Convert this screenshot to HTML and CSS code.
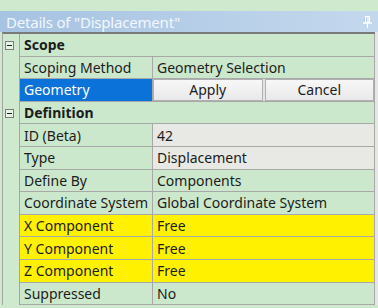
FILE: index.html
```html
<!DOCTYPE html>
<html lang="en">
<head>
    <meta charset="UTF-8">
    <title>Details of "Displacement"</title>
    <link rel="stylesheet" href="styles.css">
</head>
<body>
    <div class="title">
        <span>Details of "Displacement"</span>
        <svg class="pin" width="9" height="12" viewBox="0 0 9 12">
            <path d="M2.5 0.5h4v6h-4z" fill="none" stroke="#fff" stroke-width="1"/>
            <path d="M5 1v5" stroke="#fff" stroke-width="1"/>
            <path d="M0 7h9" stroke="#fff" stroke-width="1.4"/>
            <path d="M4.5 7v5" stroke="#fff" stroke-width="1.2"/>
        </svg>
    </div>

    <div class="grid">
        <div class="row">
            <div class="gutter"><span class="toggle"></span></div>
            <div class="cell head">Scope</div>
        </div>
        <div class="row">
            <div class="gutter"></div>
            <div class="cell label">Scoping Method</div>
            <div class="cell value">Geometry Selection</div>
        </div>
        <div class="row">
            <div class="gutter"></div>
            <div class="cell label selected">Geometry</div>
            <div class="cell value buttons">
                <button>Apply</button>
                <button>Cancel</button>
            </div>
        </div>

        <div class="row">
            <div class="gutter"><span class="toggle"></span></div>
            <div class="cell head">Definition</div>
        </div>
        <div class="row">
            <div class="gutter"></div>
            <div class="cell label">ID (Beta)</div>
            <div class="cell value readonly">42</div>
        </div>
        <div class="row">
            <div class="gutter"></div>
            <div class="cell label">Type</div>
            <div class="cell value readonly">Displacement</div>
        </div>
        <div class="row">
            <div class="gutter"></div>
            <div class="cell label">Define By</div>
            <div class="cell value">Components</div>
        </div>
        <div class="row">
            <div class="gutter"></div>
            <div class="cell label">Coordinate System</div>
            <div class="cell value">Global Coordinate System</div>
        </div>
        <div class="row warn">
            <div class="gutter"></div>
            <div class="cell label">X Component</div>
            <div class="cell value">Free</div>
        </div>
        <div class="row warn">
            <div class="gutter"></div>
            <div class="cell label">Y Component</div>
            <div class="cell value">Free</div>
        </div>
        <div class="row warn">
            <div class="gutter"></div>
            <div class="cell label">Z Component</div>
            <div class="cell value">Free</div>
        </div>
        <div class="row">
            <div class="gutter"></div>
            <div class="cell label">Suppressed</div>
            <div class="cell value">No</div>
        </div>
    </div>
</body>
</html>
```

FILE: styles.css
```css
body {
    margin: 0;
    background: #cfe9cf;
    font-family: "Noto Sans", "Open Sans", sans-serif;
    font-size: 14px;
    color: #1c1c1c;
}
.title {
    margin-top: 11px;
    height: 21px;
    padding: 0 6px 0 6px;
    display: flex;
    align-items: center;
    justify-content: space-between;
    background: linear-gradient(to right, #a6c3e2, #c4d8ed);
    color: #f3f7fb;
    font-size: 15px;
    letter-spacing: -0.2px;
}
.pin {
    display: block;
}
.grid {
    width: 372px;
    margin-left: 2px;
    border-top: 2px solid #7a7a7a;
    border-left: 1px solid #a4a4a4;
    box-shadow: 3px 0 0 #e6e6e6;
}
.row {
    display: flex;
    height: 22.6px;
}
.gutter {
    width: 16px;
    flex: none;
    border-right: 1px solid #a4a4a4;
    position: relative;
}
.toggle {
    position: absolute;
    left: 2px;
    top: 7px;
    width: 7px;
    height: 7px;
    border: 1px solid #7c7c7c;
    background: #e6f3e6;
}
.toggle::after {
    content: "";
    position: absolute;
    left: 1px;
    top: 3px;
    width: 5px;
    height: 1px;
    background: #222;
}
.cell {
    box-sizing: border-box;
    display: flex;
    align-items: center;
    padding-left: 4px;
    border-bottom: 1px solid #a8a8a8;
    border-right: 1px solid #a8a8a8;
    background: #cbe8cc;
    white-space: nowrap;
}
.head {
    flex: 1;
    font-weight: bold;
}
.label {
    width: 133px;
    flex: none;
}
.value {
    flex: 1;
}
.readonly {
    background: #e8e8e4;
}
.selected {
    background: #0b72d9;
    color: #fff;
}
.warn .cell {
    background: #fff100;
}
.buttons {
    padding: 0;
    gap: 2px;
    background: #e4e4e4;
}
.buttons button {
    flex: 1;
    height: 100%;
    margin: 0;
    font: inherit;
    color: #1c1c1c;
    border: 1px solid #b0b0b0;
    background: linear-gradient(#f7f7f7, #e9e9e9);
    padding: 0;
}
```
